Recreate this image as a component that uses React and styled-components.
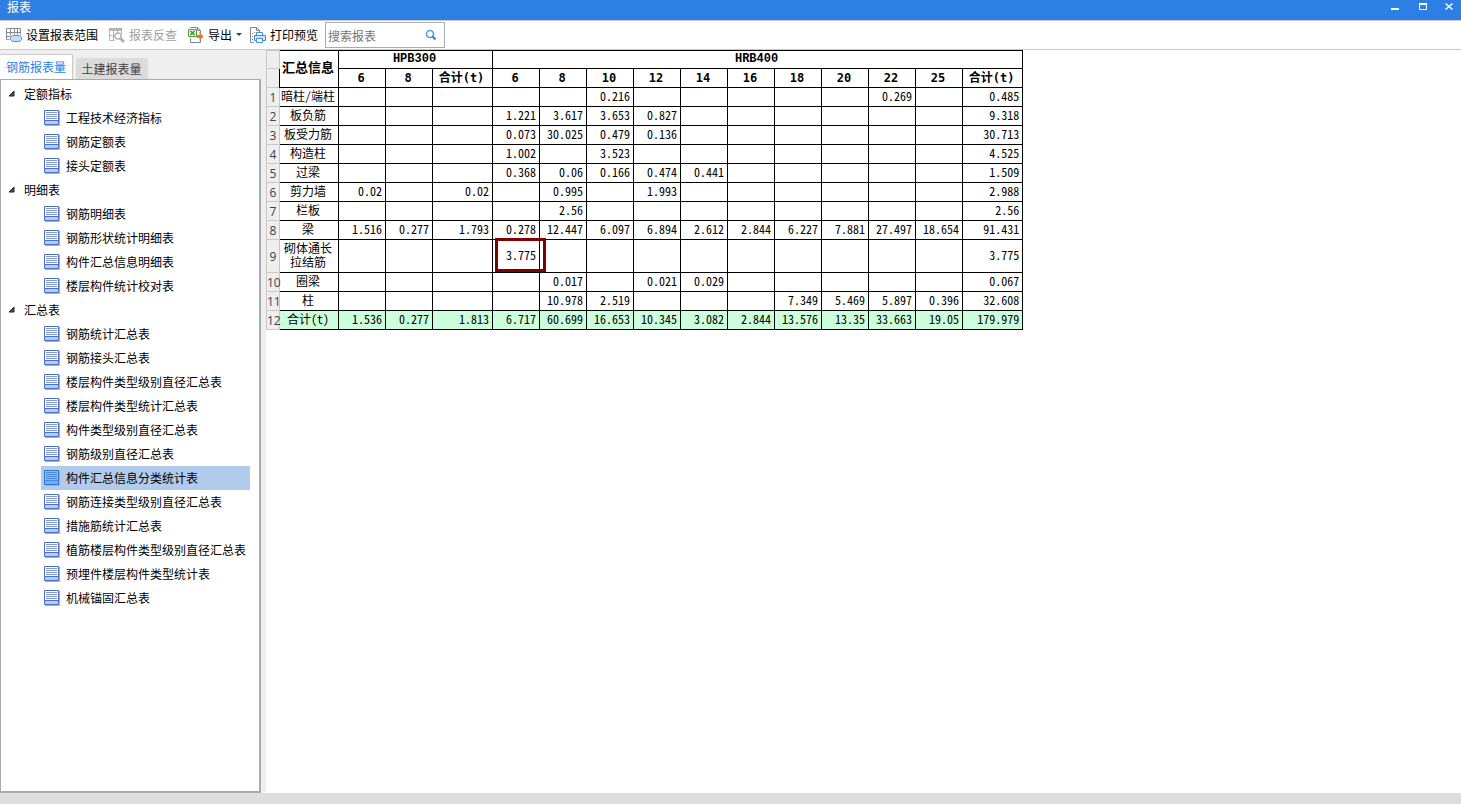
import { Fragment } from "react";
import { createGlobalStyle, styled } from "styled-components";

const GROUPS = [
  {
    title: "定额指标",
    items: ["工程技术经济指标", "钢筋定额表", "接头定额表"],
  },
  {
    title: "明细表",
    items: [
      "钢筋明细表",
      "钢筋形状统计明细表",
      "构件汇总信息明细表",
      "楼层构件统计校对表",
    ],
  },
  {
    title: "汇总表",
    items: [
      "钢筋统计汇总表",
      "钢筋接头汇总表",
      "楼层构件类型级别直径汇总表",
      "楼层构件类型统计汇总表",
      "构件类型级别直径汇总表",
      "钢筋级别直径汇总表",
      "构件汇总信息分类统计表",
      "钢筋连接类型级别直径汇总表",
      "措施筋统计汇总表",
      "植筋楼层构件类型级别直径汇总表",
      "预埋件楼层构件类型统计表",
      "机械锚固汇总表",
    ],
  },
];

const ACTIVE_ITEM = "构件汇总信息分类统计表";

const COLUMNS = [
  "6", "8", "合计(t)",
  "6", "8", "10", "12", "14", "16", "18", "20", "22", "25", "合计(t)",
];

const ROWS = [
  ["暗柱/端柱", "", "", "", "", "", "0.216", "", "", "", "", "", "0.269", "", "0.485"],
  ["板负筋", "", "", "", "1.221", "3.617", "3.653", "0.827", "", "", "", "", "", "", "9.318"],
  ["板受力筋", "", "", "", "0.073", "30.025", "0.479", "0.136", "", "", "", "", "", "", "30.713"],
  ["构造柱", "", "", "", "1.002", "", "3.523", "", "", "", "", "", "", "", "4.525"],
  ["过梁", "", "", "", "0.368", "0.06", "0.166", "0.474", "0.441", "", "", "", "", "", "1.509"],
  ["剪力墙", "0.02", "", "0.02", "", "0.995", "", "1.993", "", "", "", "", "", "", "2.988"],
  ["栏板", "", "", "", "", "2.56", "", "", "", "", "", "", "", "", "2.56"],
  ["梁", "1.516", "0.277", "1.793", "0.278", "12.447", "6.097", "6.894", "2.612", "2.844", "6.227", "7.881", "27.497", "18.654", "91.431"],
  ["砌体通长拉结筋", "", "", "", "3.775", "", "", "", "", "", "", "", "", "", "3.775"],
  ["圈梁", "", "", "", "", "0.017", "", "0.021", "0.029", "", "", "", "", "", "0.067"],
  ["柱", "", "", "", "", "10.978", "2.519", "", "", "", "7.349", "5.469", "5.897", "0.396", "32.608"],
  ["合计(t)", "1.536", "0.277", "1.813", "6.717", "60.699", "16.653", "10.345", "3.082", "2.844", "13.576", "13.35", "33.663", "19.05", "179.979"],
];

const RangeIcon = () => (
  <svg width="17" height="16" viewBox="0 0 17 16" fill="none" aria-hidden="true">
    <path d="M1.500 1.500h14v6M1.500 1.500v11h3M1.500 5.500h14M1.500 9.500h4M5.500 1.500v7M9.500 1.500v6M12.500 1.500v6" stroke="#858b94" />
    <path d="M7.500 8.500h7l2 2v2l-2 2h-7l-2-2v-2z" fill="#c6dffa" stroke="#4b8fdc" />
  </svg>
);

const CheckIcon = () => (
  <svg width="17" height="16" viewBox="0 0 17 16" fill="none" aria-hidden="true">
    <path d="M1 1h13v3H1z" fill="#b4b4b4" />
    <path d="M1.500 3v10.500h5M1.500 8.500h5M5.500 4v9M9.500 3v3M13.500 3v4" stroke="#b4b4b4" />
    <circle cx="10" cy="9" r="3" fill="#fff" stroke="#b4b4b4" strokeWidth="1.500" />
    <path d="m12 11 4 4" stroke="#b4b4b4" strokeWidth="3" />
  </svg>
);

const ExportIcon = () => (
  <svg width="17" height="16" viewBox="0 0 17 16" fill="none" aria-hidden="true">
    <path d="M3.500 11v4.500h10v-3M3.500 1V.5h7l3 3V6M10.500.5v3h3" stroke="#7d8691" />
    <path d="M1.500 2.500h8v7h-8z" fill="#e6f4df" stroke="#4ca33a" />
    <path d="m3.500 4 4 4m0-4-4 4" stroke="#3d922f" strokeWidth="1.500" />
    <path d="M10 8h2.500V5l4 4.500-4 4.500v-3H10z" fill="#ed7628" />
  </svg>
);

const PrintIcon = () => (
  <svg width="17" height="16" viewBox="0 0 17 16" fill="none" aria-hidden="true">
    <path d="M5 15.500H1.500V.5h6l3 3V5M7.500.5v3h3" stroke="#858b94" />
    <path d="M3 6.500h1M5 5.500h1M3 9.500h1M3 12.500h1" stroke="#858b94" />
    <path d="M7.500 5.500h6v3h-6z" fill="#fff" stroke="#3d8de5" />
    <path d="M5.500 8.500h11v5h-11z" fill="#cfe4fb" stroke="#3d8de5" />
    <path d="M7.500 11.500h6v4h-6z" fill="#fff" stroke="#3d8de5" />
  </svg>
);

const ReportIcon = ({ active }) => (
  <svg width="17" height="16" viewBox="0 0 17 16" aria-hidden="true">
    <path d="M1 15.500h14.500V1" fill="none" stroke="#a9adb8" />
    <path d="M.5.5h14v14H.5z" fill={active ? "#8abcf3" : "#fff"} stroke={active ? "#2e76cc" : "#4a6fc6"} />
    <path d="M1 11h13v3H1z" fill={active ? "#6fb0f5" : "#b9caff"} />
    <path d="M2 2.500h11M2 4.500h11M2 6.500h11M2 8.500h11" stroke={active ? "#4a8ad6" : "#8397cf"} />
    <path d="M1 10.500h13" stroke={active ? "#4a8ad6" : "#4a6fc6"} />
  </svg>
);

const SearchIcon = () => (
  <svg width="12" height="12" viewBox="0 0 12 12" fill="none" aria-hidden="true">
    <circle cx="5" cy="5" r="3.500" stroke="#4ba3d6" strokeWidth="1.600" />
    <path d="m7.500 7.500 3 3" stroke="#2b7fb8" strokeWidth="2" />
  </svg>
);

const App = () => {
  return (
    <Window>
      <GlobalStyle />
      <TitleBar>
        <Title>报表</Title>
        <WindowButton aria-label="最小化">
          <svg width="10" height="10"><path d="M1 7h8" stroke="#fff" strokeWidth="2" /></svg>
        </WindowButton>
        <WindowButton aria-label="最大化">
          <svg width="10" height="10"><path d="M1.500 2v5.500h7V2" fill="none" stroke="#fff" /><path d="M1 2h8" stroke="#fff" strokeWidth="2" /></svg>
        </WindowButton>
        <WindowButton aria-label="关闭">
          <svg width="10" height="10"><path d="m1.500 1.500 7 6m0-6-7 6" stroke="#fff" strokeWidth="1.500" /></svg>
        </WindowButton>
      </TitleBar>

      <Toolbar>
        <ToolButton><RangeIcon />设置报表范围</ToolButton>
        <ToolButton disabled><CheckIcon />报表反查</ToolButton>
        <ToolButton $compact><ExportIcon />导出<Caret /></ToolButton>
        <ToolButton $compact><PrintIcon />打印预览</ToolButton>
        <SearchBox>
          <input type="text" aria-label="搜索报表" placeholder="搜索报表" />
          <SearchIcon />
        </SearchBox>
      </Toolbar>

      <Body>
        <Sidebar>
          <Tabs>
            <Tab $active>钢筋报表量</Tab>
            <Tab>土建报表量</Tab>
          </Tabs>
          <Tree>
            {GROUPS.map((group) => (
              <Fragment key={group.title}>
                <GroupButton>
                  <svg width="7" height="8" aria-hidden="true"><path d="M6 2v5H1z" fill="#505050" stroke="#222" /></svg>
                  {group.title}
                </GroupButton>
                {group.items.map((item) => (
                  <TreeItem key={item} $active={item === ACTIVE_ITEM}>
                    <ReportIcon active={item === ACTIVE_ITEM} />
                    {item}
                  </TreeItem>
                ))}
              </Fragment>
            ))}
          </Tree>
        </Sidebar>

        <Report>
          <Table>
            <colgroup>
              <Col $w={13} />
              <Col $w={59} />
              {COLUMNS.map((name, i) => (
                <Col key={i} $w={name === "合计(t)" ? 60 : 47} />
              ))}
            </colgroup>
            <thead>
              <tr>
                <RowNumber />
                <TitleCell rowSpan={2}>汇总信息</TitleCell>
                <GradeCell colSpan={3}>HPB300</GradeCell>
                <GradeCell colSpan={11}>HRB400</GradeCell>
              </tr>
              <HeadRow>
                <RowNumber />
                {COLUMNS.map((name, i) => (
                  <HeadCell key={i}>{name}</HeadCell>
                ))}
              </HeadRow>
            </thead>
            <tbody>
              {ROWS.map(([name, ...values], r) => (
                <Row key={name} $total={r === ROWS.length - 1} $tall={name.length > 5}>
                  <RowNumber>{r + 1}</RowNumber>
                  <NameCell>{name}</NameCell>
                  {values.map((value, c) => (
                    <Cell key={c}>
                      {value}
                      {r === 8 && c === 3 && <Marker />}
                    </Cell>
                  ))}
                </Row>
              ))}
            </tbody>
          </Table>
        </Report>
      </Body>
      <StatusBar />
    </Window>
  );
};

export default App;

const GlobalStyle = createGlobalStyle`
  * {
    box-sizing: border-box;
  }
  body {
    margin: 0;
    font-family: "Noto Sans CJK SC", sans-serif;
    font-size: 12px;
    color: #000;
  }
  button, input {
    font: inherit;
    color: inherit;
    border: none;
    background: none;
    padding: 0;
  }
  svg {
    flex: none;
  }
`;

const Window = styled.div`
  display: flex;
  flex-direction: column;
  min-height: 100vh;
  background-color: #fff;
`;

const TitleBar = styled.header`
  display: flex;
  height: 20px;
  padding-left: 7px;
  background-color: #2d80e3;
  color: #fff;
`;

const Title = styled.h1`
  flex: 1;
  margin: 0;
  font-size: 12px;
  font-weight: 400;
  line-height: 14px;
`;

const WindowButton = styled.button`
  display: flex;
  justify-content: center;
  width: 28px;
  padding-top: 2px;
  &:last-child {
    width: 24px;
  }
`;

const Toolbar = styled.div`
  display: flex;
  align-items: center;
  height: 30px;
  padding-left: 5px;
  border-top: 1px solid #c8c8c8;
  border-bottom: 1px solid #c8c8c8;
`;

const ToolButton = styled.button`
  display: flex;
  align-items: center;
  gap: 4px;
  height: 22px;
  margin-right: ${({ $compact }) => ($compact ? "7px" : "10px")};
  padding-bottom: 2px;
  white-space: nowrap;
  svg {
    margin-top: 2px;
  }
  &:disabled {
    color: #a0a0a0;
  }
`;

const Caret = styled.span`
  border: 3px solid transparent;
  border-top-color: #404040;
  border-bottom: none;
`;

const SearchBox = styled.div`
  display: flex;
  align-items: center;
  width: 120px;
  height: 26px;
  padding: 0 7px 0 2px;
  border: 1px solid #ababab;
  input {
    flex: 1;
    min-width: 0;
    outline: none;
  }
  input::placeholder {
    color: #757575;
  }
`;

const Body = styled.div`
  display: flex;
  flex: 1;
`;

const Sidebar = styled.aside`
  display: flex;
  flex-direction: column;
  flex: none;
  width: 266px;
  padding-right: 5px;
  background-color: #efeff0;
`;

const Tabs = styled.div`
  display: flex;
  align-items: flex-end;
  gap: 3px;
  height: 29px;
`;

const Tab = styled.button`
  width: ${({ $active }) => ($active ? "73px" : "72px")};
  height: ${({ $active }) => ($active ? "25px" : "21px")};
  padding-bottom: 2px;
  border: 1px solid ${({ $active }) => ($active ? "#c8c8c8" : "#dcdcdc")};
  border-width: 1px 1px 0 0;
  border-radius: 2px 2px 0 0;
  background-color: ${({ $active }) => ($active ? "#fff" : "#dcdcdc")};
  color: ${({ $active }) => ($active ? "#2d80e3" : "#404040")};
`;

const Tree = styled.nav`
  flex: 1;
  padding: 2px 10px 3px 0;
  border: 1px solid #a9aaad;
  border-width: 1px 2px 2px 1px;
  background-color: #fff;
`;

const GroupButton = styled.button`
  display: flex;
  align-items: center;
  gap: 9px;
  width: 100%;
  height: 24px;
  padding: 0 0 2px 7px;
`;

const TreeItem = styled.button`
  display: flex;
  align-items: center;
  gap: 5px;
  width: 209px;
  height: 24px;
  margin-left: 40px;
  padding: 0 0 2px 3px;
  white-space: nowrap;
  background-color: ${({ $active }) => ($active ? "#b1cbec" : "transparent")};
  svg {
    margin-top: 2px;
  }
`;

const Report = styled.main`
  flex: 1;
  min-width: 0;
`;

/* half-width figures keep the numbers in fixed columns */
const Table = styled.table`
  width: 757px;
  table-layout: fixed;
  border-collapse: collapse;
  font-feature-settings: "hwid";
`;

const Col = styled.col`
  width: ${({ $w }) => $w}px;
`;

const HeadRow = styled.tr`
  height: 19px;
`;

const Row = styled.tr`
  height: ${({ $tall }) => ($tall ? "33px" : "19px")};
  td {
    background-color: ${({ $total }) => ($total ? "#ccffdb" : "#fff")};
  }
`;

const RowNumber = styled.th`
  height: 18px;
  padding: 2px 0 0;
  border: 1px solid #c8c8c8;
  background-color: #efeff0;
  color: #404040;
  font-family: "Open Sans", sans-serif;
  font-size: 12px;
  font-weight: 400;
  line-height: 14px;
`;

const HeadCell = styled.th`
  height: 18px;
  padding: 0 2px 1px 0;
  border: 1px solid #000;
  font-family: "DejaVu Sans Mono", "Noto Sans CJK SC", monospace;
  font-size: 12px;
  font-weight: 700;
  line-height: 14px;
  white-space: nowrap;
`;

const TitleCell = styled(HeadCell)`
  padding-bottom: 3px;
  font-size: 13px;
`;

const GradeCell = styled(HeadCell)`
  padding-bottom: 2px;
  font-family: "Liberation Mono", monospace;
`;

const NameCell = styled.td`
  padding: 0 3px 2px 1px;
  border: 1px solid #000;
  line-height: 14px;
  text-align: center;
`;

const Cell = styled.td`
  position: relative;
  padding: 0 3px 3px 0;
  border: 1px solid #000;
  line-height: 14px;
  text-align: right;
`;

const Marker = styled.span`
  position: absolute;
  inset: -2px -7px 0 2px;
  border: 3px solid #800000;
  z-index: 1;
`;

const StatusBar = styled.footer`
  height: 11px;
  background-color: #dedee0;
`;
